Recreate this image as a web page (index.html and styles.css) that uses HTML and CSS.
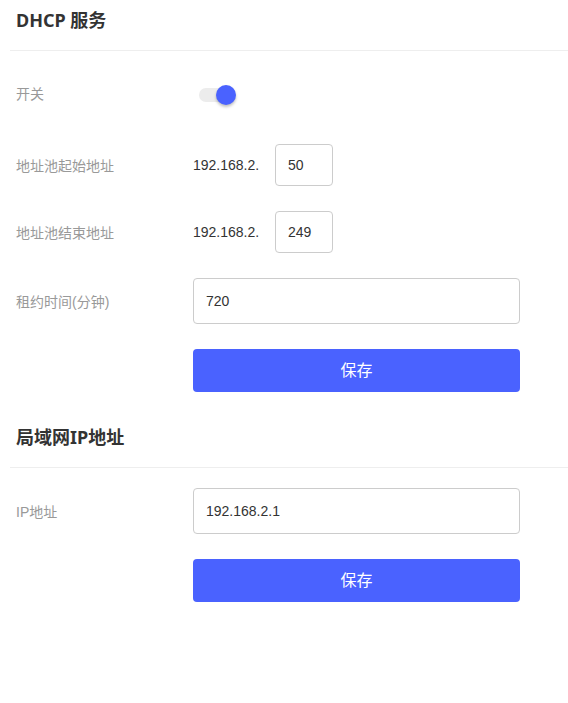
FILE: index.html
```html
<!DOCTYPE html>
<html lang="zh-CN">
<head>
<meta charset="utf-8">
<title>DHCP 服务</title>
<link rel="stylesheet" href="styles.css">
</head>
<body>
<section class="section">
  <h2 class="section-title">DHCP 服务</h2>
  <div class="form">
    <div class="row row-switch">
      <div class="label">开关</div>
      <div class="field">
        <span class="switch"><span class="track"></span><span class="thumb"></span></span>
      </div>
    </div>
    <div class="row">
      <div class="label">地址池起始地址</div>
      <div class="field">
        <span class="prefix">192.168.2.</span>
        <span class="input small">50</span>
      </div>
    </div>
    <div class="row">
      <div class="label">地址池结束地址</div>
      <div class="field">
        <span class="prefix">192.168.2.</span>
        <span class="input small">249</span>
      </div>
    </div>
    <div class="row">
      <div class="label">租约时间(分钟)</div>
      <div class="field">
        <span class="input wide">720</span>
      </div>
    </div>
    <div class="row">
      <div class="label"></div>
      <div class="field">
        <button class="btn">保存</button>
      </div>
    </div>
  </div>
</section>
<section class="section">
  <h2 class="section-title">局域网IP地址</h2>
  <div class="form">
    <div class="row">
      <div class="label">IP地址</div>
      <div class="field">
        <span class="input wide">192.168.2.1</span>
      </div>
    </div>
    <div class="row">
      <div class="label"></div>
      <div class="field">
        <button class="btn">保存</button>
      </div>
    </div>
  </div>
</section>
</body>
</html>
```

FILE: styles.css
```css
* { box-sizing: border-box; }
html, body { margin: 0; padding: 0; background: #fff; }
body {
  font-family: "Liberation Sans", "Noto Sans CJK SC", sans-serif;
  color: #333;
  width: 568px;
}
.section {
  padding-bottom: 25px;
}
.section-title {
  margin: 0 0 0 10px;
  padding: 6px 0 0 6px;
  height: 51px;
  line-height: 28px;
  font-size: 18px;
  font-weight: bold;
  font-family: "Noto Sans", "Noto Sans CJK SC", sans-serif;
  color: #333;
  border-bottom: 1px solid #eee;
}
.form {
  display: flex;
  flex-direction: column;
  gap: 25px;
  padding-top: 20px;
  padding-left: 16px;
}
.row {
  display: flex;
  align-items: center;
}
.row-switch { height: 48px; }
.row-switch .label { margin-bottom: 5px; }
.label {
  width: 177px;
  flex: none;
  font-size: 14px;
  color: #999;
}
.field {
  display: flex;
  align-items: center;
}
.prefix {
  font-size: 14px;
  color: #333;
  width: 82px;
}
.input {
  display: flex;
  align-items: center;
  border: 1px solid #ccc;
  border-radius: 4px;
  font-size: 14px;
  color: #333;
  background: #fff;
}
.input.small {
  width: 58px;
  height: 42px;
  padding-left: 12px;
}
.input.wide {
  width: 327px;
  height: 46px;
  padding-left: 12px;
}
.btn {
  width: 327px;
  height: 43px;
  border: none;
  border-radius: 4px;
  background: #4a62ff;
  color: #fff;
  font-size: 16px;
  font-family: "Liberation Sans", "Noto Sans CJK SC", sans-serif;
  padding: 0 0 3px 0;
}
.switch {
  position: relative;
  display: block;
  width: 38px;
  height: 20px;
  margin-left: 6px;
}
.track {
  position: absolute;
  left: 0;
  top: 3px;
  width: 36px;
  height: 14px;
  border-radius: 7px;
  background: #ececec;
}
.thumb {
  position: absolute;
  left: 17px;
  top: 0;
  width: 20px;
  height: 20px;
  border-radius: 50%;
  background: #4a62ff;
  box-shadow: 0 2px 3px rgba(0,0,0,0.25);
}
```
